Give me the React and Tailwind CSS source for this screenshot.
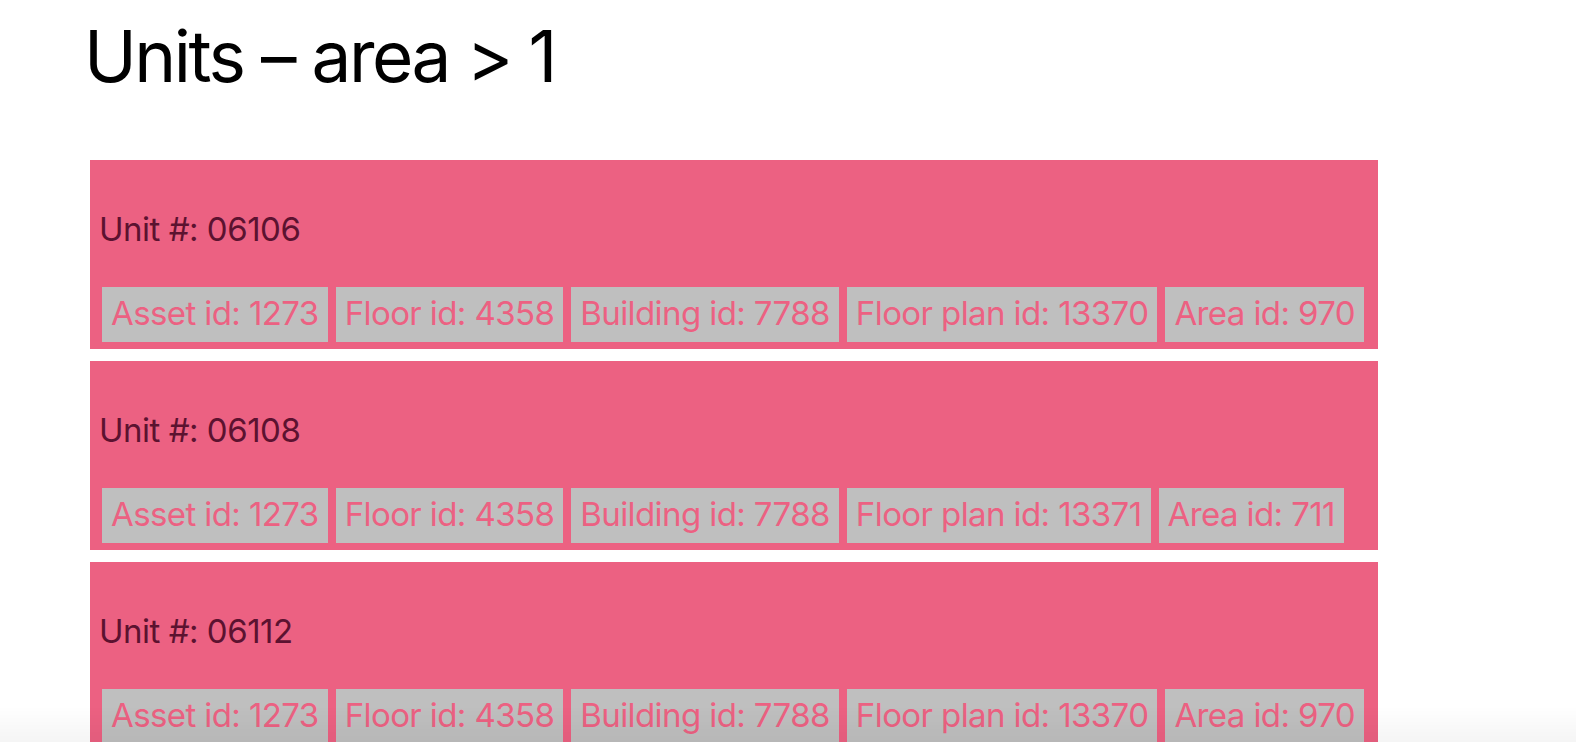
const UNITS = [
  { id: '06106', asset: 1273, floor: 4358, building: 7788, plan: 13370, area: 970 },
  { id: '06108', asset: 1273, floor: 4358, building: 7788, plan: 13371, area: 711 },
  { id: '06112', asset: 1273, floor: 4358, building: 7788, plan: 13370, area: 970 },
];

function Chip({ children }) {
  return (
    <span className="whitespace-nowrap bg-[#bfbfbf] px-[9px] pt-[6px] pb-[9px] leading-[40px] tracking-[-0.018em] text-[#ec6182]">
      {children}
    </span>
  );
}

function UnitCard({ unit }) {
  return (
    <div className="w-[1288px] bg-[#ec6182] pt-[49px] pb-[7px] pl-[12px]">
      <p className="-ml-[3px] leading-[40px] text-[#5c1230]">Unit #: {unit.id}</p>
      <div className="mt-[38px] flex gap-[8px]">
        <Chip>Asset id: {unit.asset}</Chip>
        <Chip>Floor id: {unit.floor}</Chip>
        <Chip>Building id: {unit.building}</Chip>
        <Chip>Floor plan id: {unit.plan}</Chip>
        <Chip>Area id: {unit.area}</Chip>
      </div>
    </div>
  );
}

export default function App() {
  return (
    <div className="relative min-h-[742px] bg-white font-['Inter',sans-serif] text-[33px] tracking-[-0.015em]">
      <div className="pl-[90px]">
        <h1 className="-ml-[6px] pt-[12px] text-[71px] leading-[88px] tracking-[-0.035em] text-black">Units – area &gt; 1</h1>
        <div className="mt-[60px] flex flex-col gap-[12px]">
          {UNITS.map((unit) => (
            <UnitCard key={unit.id} unit={unit} />
          ))}
        </div>
      </div>
      <div className="pointer-events-none fixed inset-x-0 bottom-0 h-[36px] bg-gradient-to-b from-transparent to-black/[0.04]" />
    </div>
  );
}
